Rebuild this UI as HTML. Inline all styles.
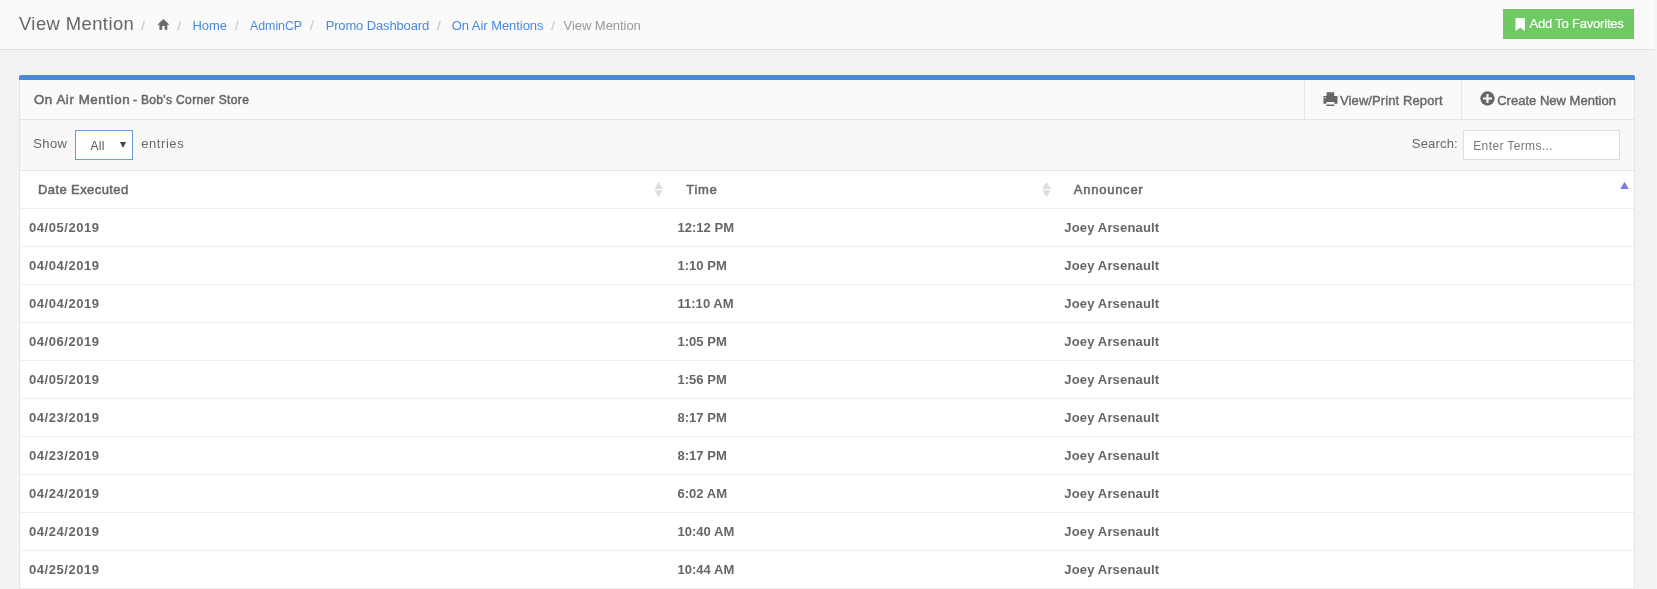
<!DOCTYPE html>
<html lang="en">
<head>
<meta charset="utf-8">
<title>View Mention</title>
<style>
*{box-sizing:border-box}
html,body{margin:0;padding:0}
#topbar,#panel{will-change:transform}
body{width:1657px;height:589px;overflow:hidden;background:#f5f5f5;font-family:"Liberation Sans",sans-serif;font-size:13px;color:#666;position:relative}
#page{position:absolute;left:0;top:0;width:1655px;height:589px;background:#f3f3f3}
a{color:#4a89dc;text-decoration:none}
.sb{font-weight:400;-webkit-text-stroke:.5px currentColor}
#topbar{position:absolute;left:0;top:0;width:1655px;height:50px;background:#fafafa;border-bottom:1px solid #e0e0e0}
#topbar .title{position:absolute;left:19px;top:13px;margin:0;font-weight:400;font-size:18.4px;line-height:22px;color:#666;white-space:nowrap}
.crumbs{position:absolute;left:0;top:16px;height:20px;line-height:20px;white-space:nowrap;margin:0;padding:0;list-style:none}
.crumbs li{position:absolute;top:0;white-space:nowrap}
.crumbs .sep{color:#ccc;-webkit-text-stroke:.3px #ccc}
.btn-fav{position:absolute;left:1503px;top:9px;width:131px;height:30px;background:#70ca63;color:#fff;font-size:13px;line-height:30px;white-space:nowrap}
.btn-fav svg{position:absolute;left:12px;top:9px}
.btn-fav span{position:absolute;left:26px;top:0;-webkit-text-stroke:.2px #fff}
#panel{position:absolute;left:19px;top:75px;width:1616px;height:520px;border-top:5px solid #4a89dc;border-radius:2px 2px 0 0;background:#fff}
#panel .inner{position:absolute;left:0;top:0;width:1616px;height:515px;border-left:1px solid #e5e5e5;border-right:1px solid #e5e5e5}
.heading{position:absolute;left:0;top:0;width:1614px;height:40px;background:#fafafa;border-bottom:1px solid #e5e5e5}
.heading .ptitle{position:absolute;left:0;top:0;line-height:39px;white-space:nowrap;color:#666}
.heading .ptitle span{position:absolute;top:0;white-space:nowrap}
.hbtn{position:absolute;top:0;height:39px;line-height:39px;border-left:1px solid #e5e5e5;white-space:nowrap;color:#666}
.hbtn span{position:absolute;top:1px;-webkit-text-stroke-width:.4px}
.hbtn svg{position:absolute}
.menu{position:absolute;left:0;top:40px;width:1614px;height:51px;background:#f8f8f8;border-bottom:1px solid #e5e5e5}
.menu .lbl{position:absolute;line-height:20px;white-space:nowrap}
.sel{position:absolute;left:55px;top:10px;width:58px;height:30px;border:1px solid #6b9fe2;background:#fff;font-size:12px;line-height:28px;color:#555}
.sel span{position:absolute;left:15px;top:1px}
.sel i{position:absolute;left:44px;top:11px;width:0;height:0;border-left:3.3px solid transparent;border-right:3.3px solid transparent;border-top:6.2px solid #444}
.search{position:absolute;left:1443px;top:10px;width:157px;height:30px;border:1px solid #ddd;background:#fff;font-size:12px;line-height:28px;color:#777}
.search span{position:absolute;left:10px;top:1px;white-space:nowrap}
table{position:absolute;left:0;top:91px;width:1614px;border-collapse:separate;border-spacing:0;table-layout:fixed}
th,td{height:38px;padding:0;border-bottom:1px solid #eee;text-align:left;font-size:13px;color:#666;white-space:nowrap;position:relative}
td{font-weight:700}
th{padding-left:18px}
td{padding-left:9px}
.sort{position:absolute;top:0}
/*fit*/
#t_title{letter-spacing:0.43px;margin-left:0.13px}
#c_home{letter-spacing:-0.01px;margin-left:-0.59px}
#c_admin{letter-spacing:-0.06px;margin-left:0.08px;font-size:12.4px}
#c_promo{letter-spacing:-0.14px;margin-left:-0.38px}
#c_onair{letter-spacing:-0.05px;margin-left:-0.24px}
#c_view{letter-spacing:-0.05px;margin-left:-0.45px}
#b_fav{letter-spacing:-0.2px;margin-left:0.54px}
#p_t1{letter-spacing:0.59px;margin-left:-0.09px;font-size:13.3px}
#p_t2{letter-spacing:0.37px;margin-left:-0.14px}
#h_print{letter-spacing:0.1px;margin-left:0.04px}
#h_create{letter-spacing:0.02px;margin-left:-0.86px}
#m_show{letter-spacing:0.31px;margin-left:-0.65px}
#m_all{letter-spacing:0.28px;margin-left:-0.59px}
#m_entries{letter-spacing:0.56px;margin-left:-0.74px}
#m_search{letter-spacing:0.17px;margin-left:-0.18px}
#m_enter{letter-spacing:0.38px;margin-left:-0.77px}
#th1{letter-spacing:0.41px;margin-left:0.01px}
#th2{letter-spacing:0.68px;margin-left:0.31px}
#th3{letter-spacing:0.76px;margin-left:-0.28px}
td.d{letter-spacing:.55px}
td.t{letter-spacing:.05px;padding-left:9.4px}
td.a{letter-spacing:.16px;padding-left:8.3px}
/*endfit*/
</style>
</head>
<body>
<div id="page">
<header id="topbar">
  <h1 class="title" id="t_title">View Mention</h1>
  <ol class="crumbs">
    <li class="sep" style="left:141.3px">/</li>
    <li style="left:157.25px;top:0"><svg width="13" height="11" viewBox="0 0 13 11" style="position:absolute;left:0;top:2.9px"><path d="M6.4 0 L12.5 5.8 H10.3 V10.8 H7.7 V7.1 H5.2 V10.8 H2.4 V5.8 H0.3 Z" fill="#6a6a6a"/></svg></li>
    <li class="sep" style="left:177.4px">/</li>
    <li style="left:193px"><a id="c_home">Home</a></li>
    <li class="sep" style="left:235.1px">/</li>
    <li style="left:250px"><a id="c_admin">AdminCP</a></li>
    <li class="sep" style="left:309.9px">/</li>
    <li style="left:326px"><a id="c_promo">Promo Dashboard</a></li>
    <li class="sep" style="left:436.9px">/</li>
    <li style="left:452px"><a id="c_onair">On Air Mentions</a></li>
    <li class="sep" style="left:551.3px">/</li>
    <li style="left:564px;color:#999"><span id="c_view">View Mention</span></li>
  </ol>
  <a class="btn-fav"><svg width="10" height="13" viewBox="0 0 10 13"><path d="M0.5 0 H9.9 V13 L5.2 9.5 L0.5 13 Z" fill="#fff"/></svg><span id="b_fav">Add To Favorites</span></a>
</header>
<section id="panel">
 <div class="inner">
  <div class="heading">
    <div class="ptitle"><span class="sb" id="p_t1" style="left:14px">On Air Mention</span><span class="sb" id="p_t0" style="left:113px">-</span><span class="sb" id="p_t2" style="left:121px;font-size:12px;top:0.5px">Bob's Corner Store</span></div>
    <a class="hbtn" style="left:1284px;width:158px"><svg width="15" height="14" viewBox="0 0 15 14" style="left:17.7px;top:12px"><path d="M3.6 0.2 H11.2 V4 H3.6 Z M0.5 4 H14.5 V11.7 H11.4 V10 H3.4 V11.7 H0.5 Z M3.4 12.4 H11.4 V13.9 H3.4 Z" fill="#666"/><rect x="1.6" y="5.2" width="1.3" height="1.2" fill="#fafafa"/></svg><span class="sb" id="h_print" style="left:35px">View/Print Report</span></a>
    <a class="hbtn" style="left:1441px;width:173px"><svg width="15" height="15" viewBox="0 0 15 15" style="left:17.5px;top:11.4px"><circle cx="7.5" cy="7.5" r="7.15" fill="#666"/><path d="M6.45 3 H8.55 V6.45 H12 V8.55 H8.55 V12 H6.45 V8.55 H3 V6.45 H6.45 Z" fill="#fafafa"/></svg><span class="sb" id="h_create" style="left:36px">Create New Mention</span></a>
  </div>
  <div class="menu">
    <span class="lbl" id="m_show" style="left:14px;top:14px">Show</span>
    <div class="sel"><span id="m_all">All</span><i></i></div>
    <span class="lbl" id="m_entries" style="left:122px;top:14px">entries</span>
    <span class="lbl" id="m_search" style="left:1392px;top:14px">Search:</span>
    <div class="search"><span id="m_enter">Enter Terms...</span></div>
  </div>
  <table>
    <colgroup><col style="width:648px"><col style="width:388px"><col></colgroup>
    <thead><tr><th><span class="sb" id="th1">Date Executed</span><svg class="sort" style="left:634px" width="9" height="37" viewBox="0 0 9 37"><path d="M4.5 10.7 L8.8 18.1 H0.2 Z M0.2 19.2 H8.8 L4.5 26.2 Z" fill="#ddd"/></svg></th><th><span class="sb" id="th2">Time</span><svg class="sort" style="left:374px" width="9" height="37" viewBox="0 0 9 37"><path d="M4.5 10.7 L8.8 18.1 H0.2 Z M0.2 19.2 H8.8 L4.5 26.2 Z" fill="#ddd"/></svg></th><th><span class="sb" id="th3">Announcer</span><svg class="sort" style="left:564px" width="9" height="37" viewBox="0 0 9 37"><path d="M4.5 10.7 L8.8 18 H0.2 Z" fill="#7a7fdc"/></svg></th></tr></thead>
    <tbody>
      <tr><td class="d">04/05/2019</td><td class="t">12:12 PM</td><td class="a">Joey Arsenault</td></tr>
      <tr><td class="d">04/04/2019</td><td class="t">1:10 PM</td><td class="a">Joey Arsenault</td></tr>
      <tr><td class="d">04/04/2019</td><td class="t">11:10 AM</td><td class="a">Joey Arsenault</td></tr>
      <tr><td class="d">04/06/2019</td><td class="t">1:05 PM</td><td class="a">Joey Arsenault</td></tr>
      <tr><td class="d">04/05/2019</td><td class="t">1:56 PM</td><td class="a">Joey Arsenault</td></tr>
      <tr><td class="d">04/23/2019</td><td class="t">8:17 PM</td><td class="a">Joey Arsenault</td></tr>
      <tr><td class="d">04/23/2019</td><td class="t">8:17 PM</td><td class="a">Joey Arsenault</td></tr>
      <tr><td class="d">04/24/2019</td><td class="t">6:02 AM</td><td class="a">Joey Arsenault</td></tr>
      <tr><td class="d">04/24/2019</td><td class="t">10:40 AM</td><td class="a">Joey Arsenault</td></tr>
      <tr><td class="d">04/25/2019</td><td class="t">10:44 AM</td><td class="a">Joey Arsenault</td></tr>
      <tr><td class="d">04/25/2019</td><td class="t">11:02 AM</td><td class="a">Joey Arsenault</td></tr>
    </tbody>
  </table>
 </div>
</section>
</div>
</body>
</html>
